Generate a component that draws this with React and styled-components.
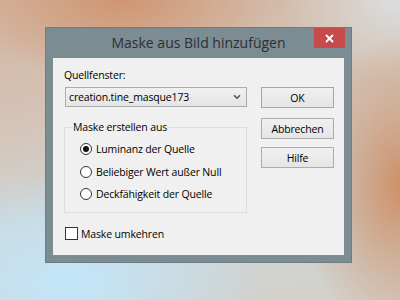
import React from 'react';
import styled, { createGlobalStyle } from 'styled-components';

const Global = createGlobalStyle`
  html, body { margin: 0; padding: 0; }
  body {
    width: 400px;
    height: 300px;
    overflow: hidden;
    font-family: "Open Sans", "Noto Sans", sans-serif;
  }
`;

const Desktop = styled.div`
  width: 400px;
  height: 300px;
  box-sizing: border-box;
  padding: 27px 0 0 45px;
  background:
    radial-gradient(ellipse 160px 80px at 120px 0px, rgba(208, 148, 110, 0.95), rgba(208, 148, 110, 0) 100%),
    radial-gradient(ellipse 110px 150px at 405px 185px, rgba(206, 142, 100, 1), rgba(206, 142, 100, 0) 100%),
    radial-gradient(ellipse 190px 110px at 70px 285px, rgba(194, 230, 250, 1), rgba(194, 230, 250, 0) 100%),
    radial-gradient(ellipse 120px 80px at 400px 0px, rgba(218, 222, 224, 1), rgba(218, 222, 224, 0) 100%),
    linear-gradient(170deg, #d2b5a2 0%, #d5c4b7 35%, #ccd8dc 65%, #d4cfc8 100%);
`;

const Window = styled.div`
  width: 307px;
  height: 236px;
  box-sizing: border-box;
  border: 1px solid #6d7d83;
  background: #7b8c92;
  display: flex;
  flex-direction: column;
`;

const TitleBar = styled.div`
  height: 30px;
  display: grid;
  grid-template-columns: 37px 1fr 37px;
  align-items: start;
`;

const Title = styled.div`
  grid-column: 2;
  text-align: center;
  font-size: 14px;
  line-height: 30px;
  color: #2c3033;
  white-space: nowrap;
`;

const CloseButton = styled.div`
  grid-column: 3;
  width: 31px;
  height: 20px;
  background: #c74b4b;
  display: flex;
  align-items: center;
  justify-content: center;
`;

const Client = styled.div`
  flex: 1;
  margin: 0 7px 7px;
  background: #f0f0f0;
  box-sizing: border-box;
  padding: 9px 10px 0 11px;
  display: grid;
  grid-template-columns: 183px 73px;
  column-gap: 14px;
  align-items: start;
  font-size: 10.5px;
  letter-spacing: -0.15px;
  color: #000;
`;

const Column = styled.div`
  display: flex;
  flex-direction: column;
`;

const Label = styled.div`
  line-height: 16px;
  height: 16px;
`;

const Combo = styled.div`
  margin: 4px 0 0 1px;
  width: 182px;
  height: 20px;
  box-sizing: border-box;
  border: 1px solid #acacac;
  background: linear-gradient(#f0f0f0, #e5e5e5);
  display: flex;
  align-items: center;
  justify-content: space-between;
  padding: 0 5px 0 3px;
`;

const GroupBox = styled.fieldset`
  margin: 12px 0 0 0;
  width: 183px;
  box-sizing: border-box;
  border: 1px solid #dcdcdc;
  padding: 3px 0 6px 15px;
  min-width: 0;
`;

const Legend = styled.legend`
  margin-left: -9px;
  padding: 0 2px;
  line-height: 16px;
`;

const OptionRow = styled.label`
  height: 22.5px;
  display: flex;
  align-items: center;
  gap: 4px;
`;

const Radio = styled.span`
  width: 12px;
  height: 12px;
  box-sizing: border-box;
  border-radius: 50%;
  border: 1px solid #333;
  background: #fff;
  display: flex;
  align-items: center;
  justify-content: center;
  &::after {
    content: '';
    width: 6px;
    height: 6px;
    border-radius: 50%;
    background: ${p => (p.$checked ? '#111' : 'transparent')};
  }
`;

const CheckRow = styled.label`
  margin: 10px 0 0 1px;
  height: 22px;
  display: flex;
  align-items: center;
  gap: 3px;
`;

const Checkbox = styled.span`
  width: 13px;
  height: 13px;
  box-sizing: border-box;
  border: 1px solid #333;
  background: #fff;
`;

const Button = styled.div`
  margin-top: ${p => p.$mt}px;
  height: 21px;
  box-sizing: border-box;
  border: 1px solid ${p => (p.$default ? '#78b0e4' : '#acacac')};
  background: linear-gradient(#f0f0f0, #e5e5e5);
  display: flex;
  align-items: center;
  justify-content: center;
`;

export default function App() {
  return (
    <>
      <Global />
      <Desktop>
        <Window>
          <TitleBar>
            <Title>Maske aus Bild hinzufügen</Title>
            <CloseButton>
              <svg width="9" height="9" viewBox="0 0 9 9">
                <path d="M1 1L8 8M8 1L1 8" stroke="#fff" strokeWidth="1.8" />
              </svg>
            </CloseButton>
          </TitleBar>
          <Client>
            <Column>
              <Label>Quellfenster:</Label>
              <Combo>
                <span>creation.tine_masque173</span>
                <svg width="8" height="6" viewBox="0 0 8 6">
                  <path d="M1 1.2L4 4.2L7 1.2" stroke="#555" strokeWidth="1.6" fill="none" />
                </svg>
              </Combo>
              <GroupBox>
                <Legend>Maske erstellen aus</Legend>
                <OptionRow><Radio $checked />Luminanz der Quelle</OptionRow>
                <OptionRow><Radio />Beliebiger Wert außer Null</OptionRow>
                <OptionRow><Radio />Deckfähigkeit der Quelle</OptionRow>
              </GroupBox>
              <CheckRow><Checkbox />Maske umkehren</CheckRow>
            </Column>
            <Column>
              <Button $mt={20} $default>OK</Button>
              <Button $mt={10}>Abbrechen</Button>
              <Button $mt={8}>Hilfe</Button>
            </Column>
          </Client>
        </Window>
      </Desktop>
    </>
  );
}
